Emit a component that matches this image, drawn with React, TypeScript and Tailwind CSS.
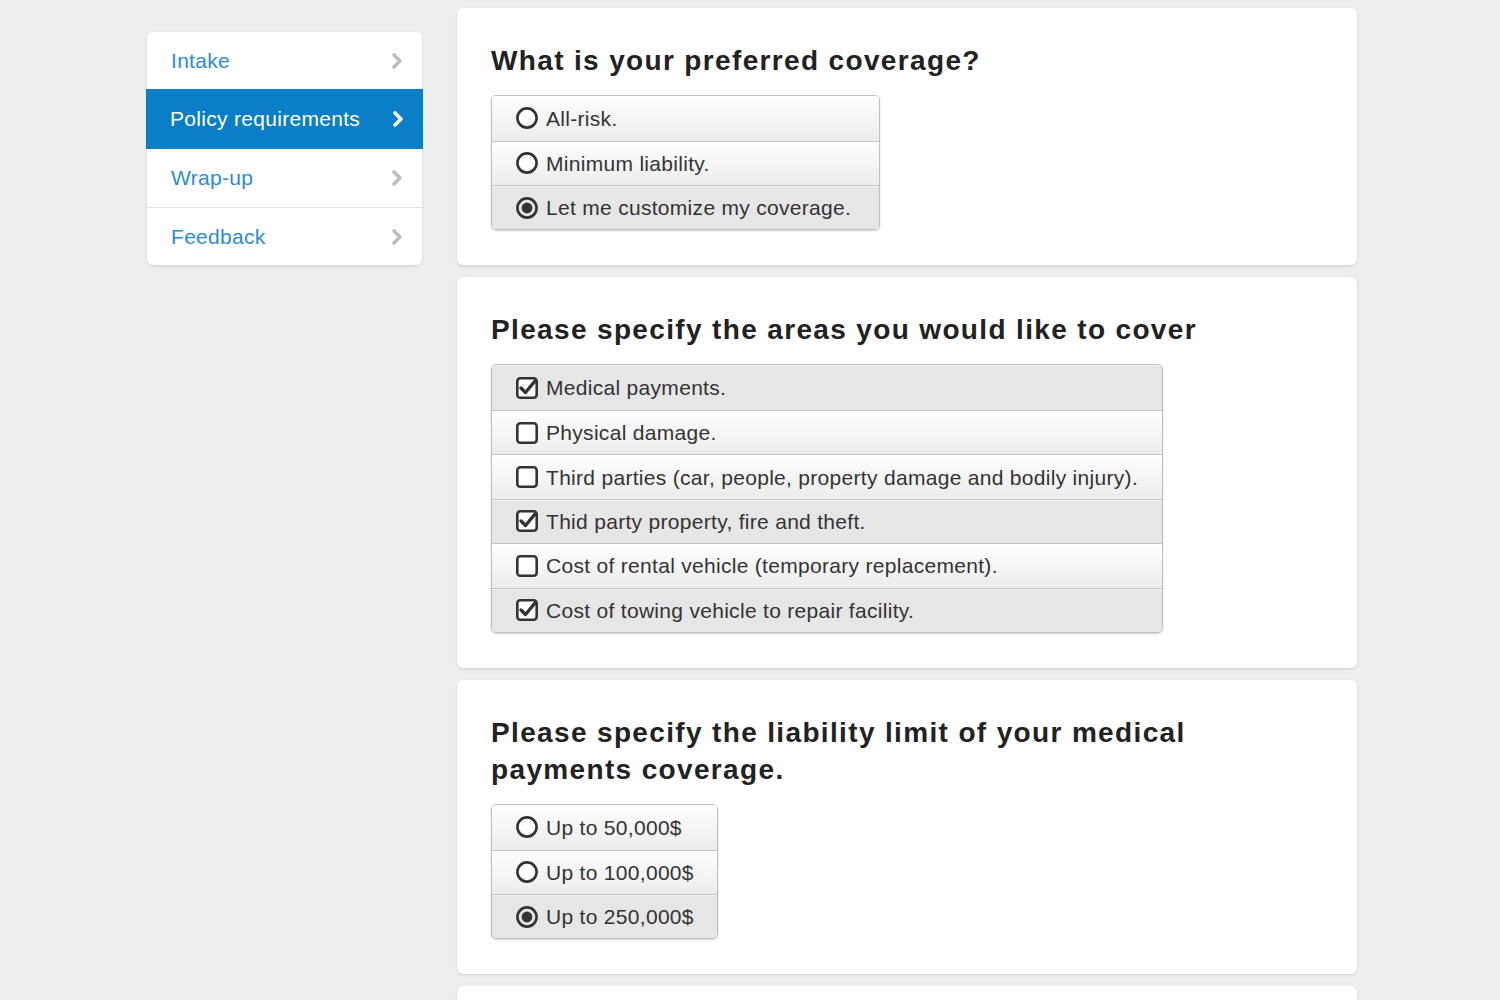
import React from 'react';

const FONT = "font-['Liberation_Sans',Arial,sans-serif]";

const NAV = [
    { label: 'Intake', active: false },
    { label: 'Policy requirements', active: true },
    { label: 'Wrap-up', active: false },
    { label: 'Feedback', active: false },
];

const Chevron = ({ white = false }: { white?: boolean }) => (
    <svg width="12" height="18" viewBox="0 0 12 18" className="shrink-0">
        <polyline
            points="3,3 9,9 3,15"
            fill="none"
            stroke={white ? '#ffffff' : '#bdbdbd'}
            strokeWidth="3.6"
            strokeLinecap="round"
            strokeLinejoin="round"
        />
    </svg>
);

const RadioIcon = ({ checked }: { checked: boolean }) => (
    <svg width="24" height="24" viewBox="0 0 24 24" className="shrink-0">
        <circle cx="12" cy="12" r="9.6" fill={checked ? '#e4e4e4' : '#ffffff'} stroke="#333" strokeWidth="2.6" />
        {checked && <circle cx="12" cy="12" r="5.4" fill="#333" />}
    </svg>
);

const CheckIcon = ({ checked }: { checked: boolean }) => (
    <svg width="24" height="24" viewBox="0 0 24 24" className="shrink-0">
        <rect x="2.3" y="2.3" width="19.4" height="19.4" rx="3" fill="#ffffff" stroke="#333" strokeWidth="2.6" />
        {checked && (
            <polyline points="6,12 10.5,16.5 20,5" fill="none" stroke="#333" strokeWidth="3.4" strokeLinecap="round" strokeLinejoin="round" />
        )}
    </svg>
);

interface Option {
    label: string;
    checked: boolean;
}

// Stacked option list, old mobile-form look
const OptionGroup = ({ options, type, width }: { options: Option[], type: 'radio' | 'checkbox', width: string }) => (
    <div className={`${width} rounded-[5px] border border-[#bfbfbf] overflow-hidden shadow-[0_1px_2px_rgba(0,0,0,0.18)]`}>
        {options.map((opt, i) => (
            <div
                key={opt.label}
                className={`flex items-center gap-[7px] pl-[23px] ${i > 0 ? 'h-[44.4px] border-t border-[#c4c4c4]' : 'h-[44.6px]'} ${opt.checked
                    ? 'bg-[#e6e6e6] shadow-[inset_0_1px_0_rgba(255,255,255,0.5)]'
                    : 'bg-linear-to-b from-[#fefefe] to-[#ececec] shadow-[inset_0_1px_0_#ffffff]'}`}
            >
                {type === 'radio' ? <RadioIcon checked={opt.checked} /> : <CheckIcon checked={opt.checked} />}
                <span className={`text-[21px] text-[#333] leading-none ${type === 'radio' ? 'tracking-[0.3px]' : 'tracking-[0.3px]'}`}>
                    {opt.label}
                </span>
            </div>
        ))}
    </div>
);

const Card = ({ title, children, className = '' }: { title?: React.ReactNode, children?: React.ReactNode, className?: string }) => (
    <div className={`bg-white rounded-[6px] shadow-[0_1px_3px_rgba(0,0,0,0.14)] px-[34px] pt-[34px] pb-[35px] ${className}`}>
        {title && (
            <h2 className="text-[28px] font-bold text-[#222] leading-[37px] tracking-[1.35px] mb-4">{title}</h2>
        )}
        {children}
    </div>
);

function App() {
    return (
        <div className={`min-h-screen bg-[#eeeeee] ${FONT}`}>
            <div className="flex items-start gap-[35px] pl-[147px] pt-[8px]">
                {/* Sidebar nav */}
                <nav className="mt-[24px] w-[275px] bg-white rounded-[6px] shadow-[0_1px_3px_rgba(0,0,0,0.14)]">
                    {NAV.map((item, i) => (
                        <div
                            key={item.label}
                            className={`flex items-center justify-between pl-[24px] pr-[19px] text-[21px] tracking-[0.3px] ${item.active
                                ? 'h-[60px] -mx-px bg-[#0a7fc7] text-white'
                                : 'text-[#2b8dd3]'} ${i === 0 ? 'h-[57px]' : ''} ${i === 2 ? 'h-[58px]' : ''} ${i === 3 ? 'h-[58px] border-t border-[#e3e3e3]' : ''}`}
                        >
                            <span>{item.label}</span>
                            <Chevron white={item.active} />
                        </div>
                    ))}
                </nav>

                {/* Questions */}
                <div className="w-[900px] flex flex-col gap-[12px]">
                    <Card title="What is your preferred coverage?">
                        <OptionGroup
                            type="radio"
                            width="w-[389px]"
                            options={[
                                { label: 'All-risk.', checked: false },
                                { label: 'Minimum liability.', checked: false },
                                { label: 'Let me customize my coverage.', checked: true },
                            ]}
                        />
                    </Card>

                    <Card title="Please specify the areas you would like to cover">
                        <OptionGroup
                            type="checkbox"
                            width="w-[672px]"
                            options={[
                                { label: 'Medical payments.', checked: true },
                                { label: 'Physical damage.', checked: false },
                                { label: 'Third parties (car, people, property damage and bodily injury).', checked: false },
                                { label: 'Thid party property, fire and theft.', checked: true },
                                { label: 'Cost of rental vehicle (temporary replacement).', checked: false },
                                { label: 'Cost of towing vehicle to repair facility.', checked: true },
                            ]}
                        />
                    </Card>

                    <Card title={<>Please specify the liability limit of your medical<br />payments coverage.</>}>
                        <OptionGroup
                            type="radio"
                            width="w-[227px]"
                            options={[
                                { label: 'Up to 50,000$', checked: false },
                                { label: 'Up to 100,000$', checked: false },
                                { label: 'Up to 250,000$', checked: true },
                            ]}
                        />
                    </Card>

                    <Card className="h-[60px] !p-0" />
                </div>
            </div>
        </div>
    );
}

export default App;
